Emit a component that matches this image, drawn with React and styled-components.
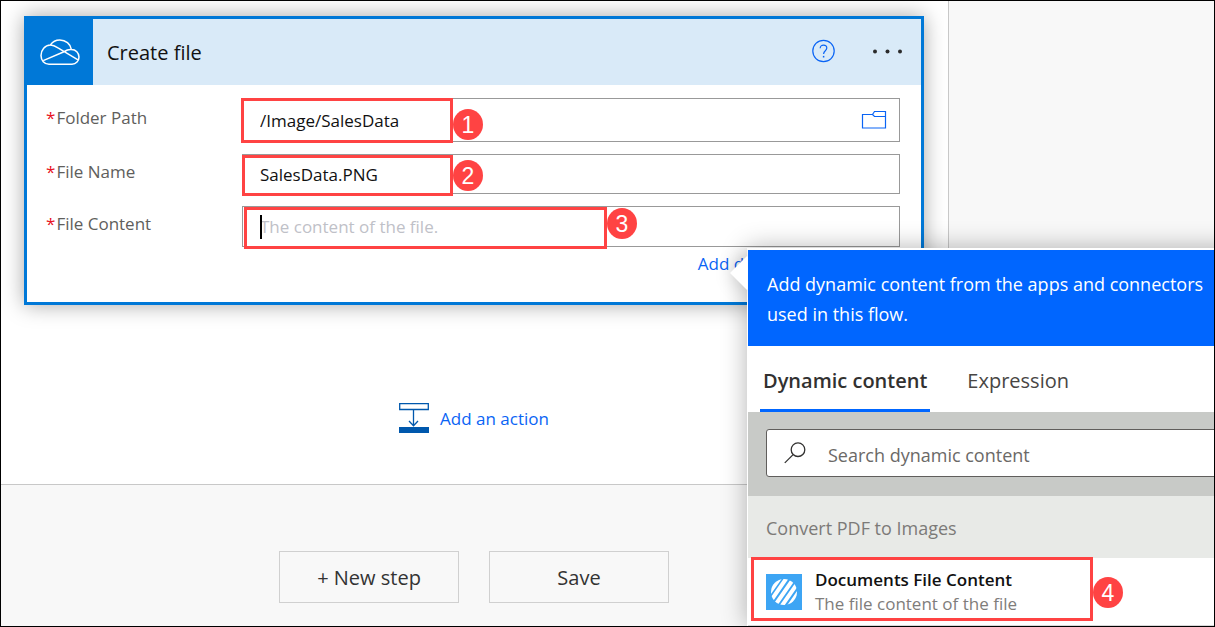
import React from "react";
import styled, { createGlobalStyle } from "styled-components";

const GlobalStyle = createGlobalStyle`
  *, *::before, *::after { box-sizing: border-box; }
  body { margin: 0; background: #f8f8f8; }
  body, button, input { font-family: "Open Sans", "Noto Sans", sans-serif; }
  button { cursor: pointer; }
  svg { display: block; flex: none; }
`;

const Shell = styled.div`
  position: relative;
  display: flex;
  min-height: 100vh;
  overflow: hidden;
  border: 1px solid #000;
  background: #f8f8f8;
`;

const Designer = styled.main`
  display: flex;
  flex: 1;
  flex-direction: column;
  min-width: 0;
`;

const Gutter = styled.aside`
  flex: none;
  width: 265px;
`;

const Canvas = styled.section`
  display: flex;
  flex-direction: column;
  align-items: center;
  padding: 15px 24px 51px 23px;
  border-right: 1px solid #c8c8c8;
  border-bottom: 1px solid #c8c8c8;
  background: #fff;
`;

const Card = styled.form`
  width: 100%;
  border: 3px solid #0078d7;
  background: #fff;
  box-shadow: 0 0 20px rgba(0, 0, 0, 0.35);
`;

const CardHeader = styled.header`
  display: flex;
  align-items: center;
  height: 66px;
  padding-right: 16px;
  background: #d9eaf8;
`;

const ConnectorTile = styled.div`
  display: flex;
  align-items: center;
  justify-content: center;
  width: 66px;
  height: 66px;
  background: #0078d7;
`;

const CardTitle = styled.h1`
  flex: 1;
  margin: 0;
  padding: 2px 0 0 14px;
  color: #111;
  font-size: 20px;
  font-weight: 400;
  line-height: 28px;
`;

const IconButton = styled.button`
  display: flex;
  align-items: center;
  justify-content: center;
  flex: none;
  width: ${(p) => p.$width}px;
  height: 36px;
  padding: 0;
  border: 0;
  background: none;
`;

const HeaderActions = styled.div`
  display: flex;
  gap: 28px;
  padding-bottom: 2px;
`;

const CardBody = styled.div`
  display: flex;
  flex-direction: column;
  gap: 12px;
  padding: 13px 21px 26px 19px;
`;

const FieldRow = styled.div`
  display: flex;
  align-items: center;
`;

const FieldLabel = styled.label`
  flex: none;
  width: 196px;
  padding-bottom: 5px;
  color: #605e5c;
  font-size: 17px;
  line-height: 24px;

  &::before {
    content: "*";
    margin-right: 1px;
    color: #e81123;
  }
`;

const FieldBox = styled.div`
  position: relative;
  display: flex;
  flex: 1;
  align-items: center;
  height: ${(p) => p.$height}px;
  padding-right: 12px;
  border: 1px solid #999;
  background: #fff;
`;

const FieldInput = styled.input`
  flex: 1;
  min-width: 0;
  height: 100%;
  padding: 0 17px;
  border: 0;
  outline: 0;
  background: none;
  color: #111;
  font-size: 17px;

  &::placeholder { color: #bfc1c8; opacity: 1; }
`;

const Caret = styled.span`
  position: absolute;
  top: 8px;
  left: 17px;
  width: 2px;
  height: 24px;
  background: #000;
`;

const Outline = styled.span`
  position: absolute;
  top: ${(p) => p.$top}px;
  left: ${(p) => p.$left}px;
  z-index: 3;
  width: ${(p) => p.$width}px;
  height: ${(p) => p.$height}px;
  border: 3px solid #ff4343;
  pointer-events: none;
`;

const StepBadge = styled.span`
  position: absolute;
  top: ${(p) => p.$top}px;
  left: 100%;
  display: flex;
  align-items: center;
  justify-content: center;
  width: 30px;
  height: 31px;
  margin-left: 3px;
  border-radius: 50%;
  background: #ff4343;
  color: #fff;
  font-family: "Liberation Sans", sans-serif;
  font-size: 23px;
  line-height: 30px;
`;

const LinkRow = styled.div`
  display: flex;
  justify-content: flex-end;
  padding-right: 34px;
  margin-top: -7px;
`;

const TextLink = styled.a`
  color: #0a64f5;
  font-size: 17px;
  line-height: 24px;
  text-decoration: none;
`;

const AddAction = styled.button`
  display: flex;
  align-items: center;
  gap: 11px;
  height: 30px;
  margin-top: 98px;
  padding: 0;
  border: 0;
  background: none;
  color: #0a64f5;
  font-size: 17px;
`;

const Footer = styled.footer`
  display: flex;
  flex: 1;
  align-items: flex-start;
  justify-content: center;
  gap: 30px;
  padding: 66px 2px 23px 0;
`;

const FooterButton = styled.button`
  width: 180px;
  height: 52px;
  padding: 0;
  border: 1px solid #d0d0d0;
  background: #f8f8f8;
  color: #333;
  font-size: 20px;
`;

const Flyout = styled.section`
  position: absolute;
  top: 247px;
  left: 746px;
  z-index: 2;
  width: 540px;
  border-top: 2px solid #fff;
  border-left: 1px solid #fff;
  background: #fff;
  box-shadow: 0 0 24px rgba(0, 0, 0, 0.3);
`;

const Pointer = styled.span`
  position: absolute;
  top: 11px;
  left: -13px;
  width: 24px;
  height: 24px;
  background: #fff;
  box-shadow: 0 0 20px rgba(0, 0, 0, 0.2);
  transform: rotate(45deg);
`;

const Banner = styled.p`
  position: relative;
  margin: 0;
  padding: 19px 60px 17px 19px;
  background: #0066ff;
  color: #fff;
  font-size: 18px;
  line-height: 30px;
  white-space: nowrap;
`;

const Tabs = styled.div`
  position: relative;
  display: flex;
  gap: 34px;
  height: 66px;
  padding-left: 12px;
  background: #fff;
`;

const Tab = styled.button`
  padding: 2px 3px 0;
  border: 0;
  border-top: 3px solid transparent;
  border-bottom: 3px solid ${(p) => (p.$active ? "#0066ff" : "transparent")};
  background: none;
  color: ${(p) => (p.$active ? "#323130" : "#484644")};
  font-size: 20px;
  font-weight: ${(p) => (p.$active ? 600 : 400)};
`;

const SearchZone = styled.div`
  padding: 17px 18px 19px;
  background: #c8cac7;
`;

const SearchBox = styled.div`
  display: flex;
  align-items: center;
  gap: 22px;
  height: 48px;
  padding: 0 17px;
  border: 1px solid #605e5c;
  border-radius: 3px;
  background: #fff;
`;

const SearchInput = styled.input`
  flex: 1;
  min-width: 0;
  height: 100%;
  padding: 3px 0 0;
  border: 0;
  outline: 0;
  background: none;
  font-size: 18px;

  &::placeholder { color: #6b6967; opacity: 1; }
`;

const GroupTitle = styled.h2`
  margin: 0;
  padding: 18px 18px 16px;
  background: #e8eae7;
  color: #7c7a78;
  font-size: 18px;
  font-weight: 400;
  line-height: 28px;
`;

const ResultRow = styled.div`
  position: relative;
  border-bottom: 1px solid #d8d8d8;
`;

const ResultButton = styled.button`
  display: flex;
  align-items: center;
  gap: 13px;
  width: 100%;
  height: 67px;
  padding: 1px 18px 0;
  border: 0;
  background: #fff;
  text-align: left;
`;

const ResultText = styled.span`
  display: flex;
  flex-direction: column;
  font-size: 17px;
  line-height: 24px;
`;

const ResultTitle = styled.span`
  color: #111;
  font-weight: 600;
`;

const ResultHint = styled.span`
  color: #7f7d7b;
`;

const CloudIcon = () => (
  <svg width="40" height="27" viewBox="0 0 40 27" fill="none" stroke="#fff" strokeWidth="1.5" strokeLinejoin="round" aria-hidden="true">
    <path d="M9 25.2C4.3 25.2 1 21.3 1 16.6C1 10.8 5 6.2 10.4 6C12.4 3 15.8 1 19.8 1C25.6 1 30.6 5 31.4 10.5C35.8 10.5 39 13.8 39 18C39 22 36 25.2 32 25.2Z" />
    <path d="M10.4 6C13.4 6 15.8 7.4 18 8.8L38 20.8M3.2 21.6L22.8 13.2L27.4 11C28.8 10.5 30 10.3 31.4 10.5" />
  </svg>
);

const HelpIcon = () => (
  <svg width="24" height="24" viewBox="0 0 24 24" fill="none" stroke="#0a64f5" strokeWidth="1.2" aria-hidden="true">
    <circle cx="12.5" cy="12" r="10.7" />
    <path d="M9.2 9.2C9.2 7.3 10.7 6.2 12.5 6.2C14.4 6.2 15.8 7.3 15.8 9.1C15.8 11.8 12.6 11.7 12.6 15" />
    <path d="M12.6 16.9V18.5" strokeWidth="1.5" />
  </svg>
);

const MoreIcon = () => (
  <svg width="30" height="6" viewBox="0 0 30 6" fill="#2b2b2b" aria-hidden="true">
    <circle cx="3" cy="3.5" r="2" />
    <circle cx="15.5" cy="3.5" r="2" />
    <circle cx="28" cy="3.5" r="2" />
  </svg>
);

const FolderIcon = () => (
  <svg width="26" height="20" viewBox="0 0 26 20" fill="none" stroke="#0a64f5" strokeWidth="1.2" aria-hidden="true">
    <path d="M1.5 4.5H11.5L13.5 1.5H24.5V18H1.5Z" />
    <path d="M11.5 4.5L13.5 6.5H24.5" />
  </svg>
);

const InsertIcon = () => (
  <svg width="30" height="30" viewBox="0 0 30 30" fill="none" stroke="#0058ad" strokeWidth="1.3" aria-hidden="true">
    <path d="M0.7 0.7H29.3V6.5H0.7Z" />
    <path d="M14.5 6.5V22.5M10 18L14.5 22.7L19 18" />
    <path d="M0 24H30V30H0Z" fill="#0058ad" stroke="none" />
  </svg>
);

const SearchIcon = () => (
  <svg width="22" height="22" viewBox="0 0 22 22" fill="none" stroke="#323130" strokeWidth="1.3" aria-hidden="true">
    <circle cx="14" cy="7.7" r="6.8" />
    <path d="M9.1 12.6L0.8 20.9" />
  </svg>
);

const StripesIcon = () => (
  <svg width="36" height="36" viewBox="0 0 36 36" aria-hidden="true">
    <defs>
      <clipPath id="disc"><circle cx="18" cy="18" r="13" /></clipPath>
    </defs>
    <rect width="36" height="36" fill="#3da5f4" />
    <g clipPath="url(#disc)" stroke="#fff" strokeWidth="4">
      <path d="M-1 25L16 1M4 28L22 2M10 30L28 4M15 33L33 7M21 35L37 12" />
    </g>
  </svg>
);

const fields = [
  { id: "folder", label: "Folder Path", value: "/Image/SalesData", height: 44, browse: true, mark: { $left: -2, $top: -1, $width: 212, $height: 45 }, badge: 8 },
  { id: "name", label: "File Name", value: "SalesData.PNG", height: 40, mark: { $left: -1, $top: 0, $width: 211, $height: 41 }, badge: 2 },
  { id: "content", label: "File Content", placeholder: "The content of the file.", height: 41, caret: true, mark: { $left: 1, $top: 0, $width: 363, $height: 42 }, badge: -2 },
];

function Field({ id, label, value, placeholder, height, browse, caret, mark, badge, step }) {
  return (
    <FieldRow>
      <FieldLabel htmlFor={id}>{label}</FieldLabel>
      <FieldBox $height={height}>
        <FieldInput id={id} defaultValue={value} placeholder={placeholder} />
        {caret && <Caret />}
        {browse && (
          <IconButton type="button" $width={26} aria-label="Browse folders">
            <FolderIcon />
          </IconButton>
        )}
        <Outline {...mark}>
          <StepBadge $top={badge}>{step}</StepBadge>
        </Outline>
      </FieldBox>
    </FieldRow>
  );
}

export default function App() {
  return (
    <>
      <GlobalStyle />
      <Shell>
        <Designer>
          <Canvas>
            <Card onSubmit={(e) => e.preventDefault()}>
              <CardHeader>
                <ConnectorTile><CloudIcon /></ConnectorTile>
                <CardTitle>Create file</CardTitle>
                <HeaderActions>
                  <IconButton type="button" $width={36} aria-label="Help"><HelpIcon /></IconButton>
                  <IconButton type="button" $width={36} aria-label="More options"><MoreIcon /></IconButton>
                </HeaderActions>
              </CardHeader>
              <CardBody>
                {fields.map((field, i) => (
                  <Field key={field.id} {...field} step={i + 1} />
                ))}
                <LinkRow>
                  <TextLink href="#dynamic">Add dynamic content</TextLink>
                </LinkRow>
              </CardBody>
            </Card>
            <AddAction type="button">
              <InsertIcon />
              Add an action
            </AddAction>
          </Canvas>
          <Footer>
            <FooterButton type="button">+ New step</FooterButton>
            <FooterButton type="button">Save</FooterButton>
          </Footer>
        </Designer>
        <Gutter />
        <Flyout id="dynamic">
          <Pointer />
          <Banner>
            Add dynamic content from the apps and connectors
            <br />
            used in this flow.
          </Banner>
          <Tabs>
            <Tab type="button" $active>Dynamic content</Tab>
            <Tab type="button">Expression</Tab>
          </Tabs>
          <SearchZone>
            <SearchBox>
              <SearchIcon />
              <SearchInput aria-label="Search dynamic content" placeholder="Search dynamic content" />
            </SearchBox>
          </SearchZone>
          <GroupTitle>Convert PDF to Images</GroupTitle>
          <ResultRow>
            <ResultButton type="button">
              <StripesIcon />
              <ResultText>
                <ResultTitle>Documents File Content</ResultTitle>
                <ResultHint>The file content of the file</ResultHint>
              </ResultText>
            </ResultButton>
            <Outline $left={3} $top={-1} $width={342} $height={64}>
              <StepBadge $top={17}>4</StepBadge>
            </Outline>
          </ResultRow>
        </Flyout>
      </Shell>
    </>
  );
}
